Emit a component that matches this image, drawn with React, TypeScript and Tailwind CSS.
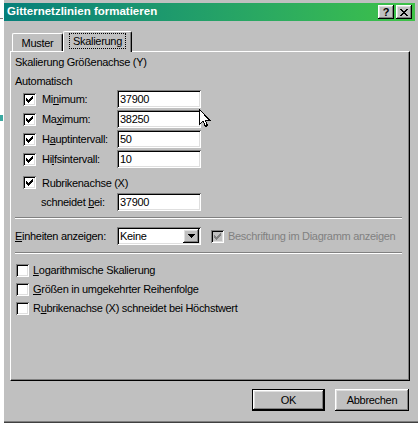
import React from "react";

const sunken =
  "shadow-[inset_1px_1px_0_#808080,inset_-1px_-1px_0_#ffffff,inset_2px_2px_0_#000000,inset_-2px_-2px_0_#dfdfdf]";
const raised =
  "shadow-[inset_-1px_-1px_0_#000000,inset_1px_1px_0_#ffffff,inset_-2px_-2px_0_#808080,inset_2px_2px_0_#dfdfdf]";

const checkCols = [2, 3, 4, 3, 2, 1, 0];

function Check({ checked = false, disabled = false }: { checked?: boolean; disabled?: boolean }) {
  return (
    <div className={`w-[13px] h-[13px] shrink-0 ${sunken} ${disabled ? "bg-[#c0c0c0]" : "bg-white"}`}>
      {checked && (
        <svg width="13" height="13" viewBox="0 0 13 13" shapeRendering="crispEdges">
          {checkCols.map((r, c) => (
            <rect key={c} x={3 + c} y={3 + r} width="1" height="3" fill={disabled ? "#808080" : "#000"} />
          ))}
        </svg>
      )}
    </div>
  );
}

function Field({ value }: { value: string }) {
  return (
    <div className={`w-[84px] h-[18px] bg-white ${sunken} pl-[3px] flex items-center leading-none`}>
      {value}
    </div>
  );
}

function Row({ label, value }: { label: React.ReactNode; value: string }) {
  return (
    <div className="flex items-center h-[18px] pl-[12px]">
      <Check checked />
      <span className="ml-[6px] w-[75px]">{label}</span>
      <Field value={value} />
    </div>
  );
}

export default function App() {
  return (
    <div className="w-[418px] h-[423px] bg-white flex overflow-hidden relative font-['Liberation_Sans',Arial,sans-serif] text-[11px] tracking-[-0.3px] text-black">
      {/* spreadsheet behind the dialog */}
      <div className="w-[3px] shrink-0 flex flex-col">
        <div className="h-[18px]" />
        <div className="h-px bg-[#808080]" />
        <div className="h-[96px]" />
        <div className="h-[6px] bg-[#3aa8a0]" />
      </div>

      <div className="w-[415px] h-[423px] shrink-0 bg-[#c0c0c0] border-l border-white pt-[3px] flex flex-col">
        {/* title bar */}
        <div className="w-[411px] h-[18px] bg-gradient-to-r from-[#067f7a] to-[#3ec246] flex items-center pl-[3px] pr-[3px]">
          <span className="text-white font-bold text-[11.5px] tracking-[0px]">Gitternetzlinien formatieren</span>
          <div className="ml-auto flex gap-[2px]">
            <div className={`w-[16px] h-[14px] bg-[#c0c0c0] ${raised} flex items-center justify-center font-bold text-[11px] leading-none`}>
              ?
            </div>
            <div className={`w-[16px] h-[14px] bg-[#c0c0c0] ${raised} flex items-center justify-center`}>
              <svg width="8" height="7" viewBox="0 0 8 7" shapeRendering="crispEdges">
                <path d="M0 0h2v1h-2zM6 0h2v1h-2zM1 1h2v1h-2zM5 1h2v1h-2zM2 2h4v1h-4zM3 3h2v1h-2zM2 4h4v1h-4zM1 5h2v1h-2zM5 5h2v1h-2zM0 6h2v1h-2zM6 6h2v1h-2z" fill="#000" />
              </svg>
            </div>
          </div>
        </div>

        {/* tabs */}
        <div className="mt-[10px] h-[20px] flex items-end pl-[8px]">
          <div className="w-[51px] h-[18px] border-l border-t border-white rounded-tl-[2px] shadow-[inset_-1px_0_0_#808080] border-r border-r-black rounded-tr-[2px] flex items-center justify-center pt-[1px]">
            Muster
          </div>
          <div className="relative z-10 w-[69px] h-[21px] -mb-px bg-[#c0c0c0] border-l border-t border-white border-r border-r-black shadow-[inset_-1px_0_0_#808080] rounded-t-[2px] flex items-start justify-center pt-[1px]">
            <span className="border border-dotted border-black px-[3px] h-[16px] flex items-center">Skalierung</span>
          </div>
        </div>

        {/* panel */}
        <div className="ml-[6px] w-[400px] h-[330px] border border-t-white border-l-white border-r-black border-b-black shadow-[inset_-1px_-1px_0_#808080] flex flex-col">
          <div className="mt-[4px] h-[13px] leading-[13px] pl-[4px]">Skalierung Größenachse (Y)</div>
          <div className="mt-[6px] h-[13px] leading-[13px] pl-[4px]">Automatisch</div>
          <div className="mt-[2px] flex flex-col gap-[2px]">
            <Row label={<>Mi<u>n</u>imum:</>} value="37900" />
            <Row label={<>Ma<u>x</u>imum:</>} value="38250" />
            <Row label={<>H<u>a</u>uptintervall:</>} value="50" />
            <Row label={<>Hi<u>l</u>fsintervall:</>} value="10" />
          </div>
          <div className="mt-[8px] h-[13px] flex items-center pl-[12px]">
            <Check checked />
            <span className="ml-[6px] pt-[2px]">Rubrikenachse (X)</span>
          </div>
          <div className="mt-[4px] h-[18px] flex items-center pl-[30px]">
            <span className="w-[76px]">
              schneidet <u>b</u>ei:
            </span>
            <Field value="37900" />
          </div>
          <div className="mt-[6px] ml-[4px] w-[387px] h-[2px] border-t border-t-[#808080] border-b border-b-white" />
          <div className="mt-[8px] h-[18px] flex items-center pl-[4px]">
            <span className="w-[102px]">
              <u>E</u>inheiten anzeigen:
            </span>
            <div className={`w-[84px] h-[18px] bg-white ${sunken} flex items-center pl-[3px] pr-[2px]`}>
              <span>Keine</span>
              <div className={`ml-auto w-[16px] h-[14px] bg-[#c0c0c0] ${raised} flex items-center justify-center`}>
                <svg width="7" height="4" viewBox="0 0 7 4" shapeRendering="crispEdges">
                  <path d="M0 0h7v1h-7zM1 1h5v1h-5zM2 2h3v1h-3zM3 3h1v1h-1z" fill="#000" />
                </svg>
              </div>
            </div>
            <div className="ml-[10px]">
              <Check checked disabled />
            </div>
            <span className="ml-[4px] text-[#808080]">Beschriftung im Diagramm anzeigen</span>
          </div>
          <div className="mt-[7px] ml-[4px] w-[387px] h-[2px] border-t border-t-[#808080] border-b border-b-white" />
          <div className="mt-[10px] flex flex-col gap-[6px] pl-[5px]">
            <div className="h-[13px] flex items-center">
              <Check />
              <span className="ml-[4px]">
                <u>L</u>ogarithmische Skalierung
              </span>
            </div>
            <div className="h-[13px] flex items-center">
              <Check />
              <span className="ml-[4px]">
                <u>G</u>rößen in umgekehrter Reihenfolge
              </span>
            </div>
            <div className="h-[13px] flex items-center">
              <Check />
              <span className="ml-[4px]">
                R<u>u</u>brikenachse (X) schneidet bei Höchstwert
              </span>
            </div>
          </div>
        </div>

        {/* buttons */}
        <div className="mt-[8px] flex pl-[248px] gap-[10px]">
          <div className="w-[73px] h-[22px] border border-black">
            <div className={`w-full h-full ${raised} flex items-center justify-center`}>OK</div>
          </div>
          <div className={`w-[74px] h-[22px] ${raised} flex items-center justify-center`}>Abbrechen</div>
        </div>

        <div className="mt-auto h-[2px] border-t border-t-[#808080] border-b border-b-[#404040]" />
      </div>

      {/* mouse pointer */}
      <svg className="absolute left-[199px] top-[109px]" width="12" height="19" viewBox="0 0 12 19" shapeRendering="crispEdges">
        <path d="M0.5 0.5 L0.5 15.5 L4 12 L6.5 17.5 L8.5 16.5 L6 11 L10.5 11 Z" fill="#fff" stroke="#000" strokeWidth="1" />
      </svg>
    </div>
  );
}
